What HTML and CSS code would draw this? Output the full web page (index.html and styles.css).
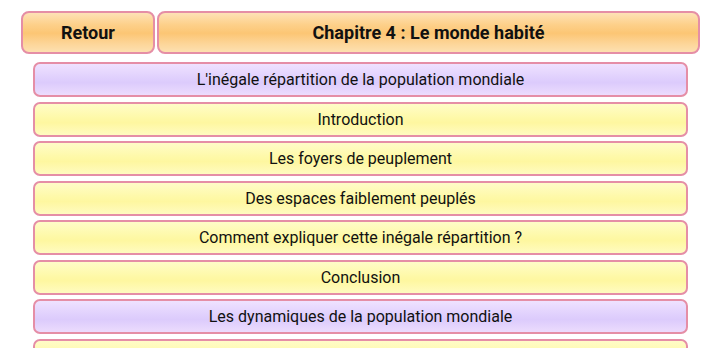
FILE: index.html
```html
<!DOCTYPE html>
<html lang="fr">
<head>
<meta charset="utf-8">
<link rel="stylesheet" href="styles.css">
</head>
<body>
<div class="page">
  <header class="top">
    <div class="btn back">Retour</div>
    <div class="btn title">Chapitre 4 : Le monde habité</div>
  </header>
  <ul class="list">
    <li class="row purple">L'inégale répartition de la population mondiale</li>
    <li class="row yellow">Introduction</li>
    <li class="row yellow">Les foyers de peuplement</li>
    <li class="row yellow">Des espaces faiblement peuplés</li>
    <li class="row yellow">Comment expliquer cette inégale répartition ?</li>
    <li class="row yellow">Conclusion</li>
    <li class="row purple">Les dynamiques de la population mondiale</li>
    <li class="row yellow"></li>
  </ul>
</div>
</body>
</html>
```
FILE: styles.css
```css
html, body {
  margin: 0;
  padding: 0;
  background: #ffffff;
  overflow: hidden;
  height: 360px;
}
.page {
  font-family: Roboto, "Liberation Sans", sans-serif;
  color: #111111;
  padding-top: 11px;
}
.top {
  display: flex;
  gap: 2px;
  margin: 0 20px 0 21px;
  height: 43px;
}
.btn {
  box-sizing: border-box;
  border: 2px solid #e58ea6;
  border-radius: 8px;
  background: linear-gradient(to bottom, #fee2b6 0%, #fdd08a 30%, #fcc674 52%, #fdd69a 80%, #fde0b0 100%);
  display: flex;
  align-items: center;
  justify-content: center;
  font-weight: bold;
  font-size: 18px;
}
.back {
  width: 134px;
  flex: none;
}
.title {
  flex: 1;
}
.list {
  list-style: none;
  margin: 8px 32px 0 33px;
  padding: 0;
  height: 286px;
  overflow: hidden;
  display: flex;
  flex-direction: column;
  gap: 4.5px;
}
.row {
  box-sizing: border-box;
  height: 35px;
  border: 2px solid #e58ea6;
  border-radius: 7px;
  display: flex;
  align-items: center;
  justify-content: center;
  font-size: 16px;
  flex: none;
}
.purple {
  background: linear-gradient(to bottom, #efe2ff 0%, #e0d0fd 45%, #dccbfc 60%, #ecdcfd 100%);
}
.yellow {
  background: linear-gradient(to bottom, #fffcc8 0%, #fef9a8 45%, #fef7a0 60%, #fffbc0 100%);
}
```
